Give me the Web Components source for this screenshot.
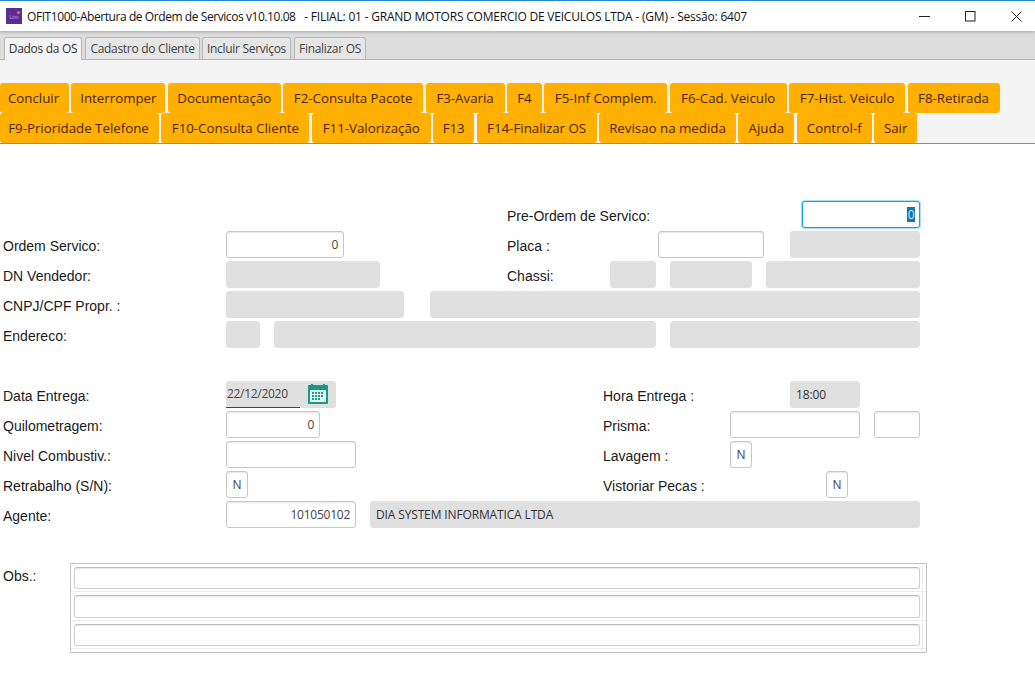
<!DOCTYPE html>
<html lang="pt"><head><meta charset="utf-8"><title>OFIT1000</title>
<style>html,body{margin:0;padding:0;background:#fff;overflow:hidden;height:686px}</style></head>
<body>
<os-app></os-app>
<script>
const UI='"Open Sans","Noto Sans",sans-serif';
function def(name,css,html,init){
  customElements.define(name,class extends HTMLElement{
    constructor(){super();const r=this.attachShadow({mode:'open'});r.innerHTML='<style>'+css+'</style>'+html;}
    connectedCallback(){
      if(this.hasAttribute('w'))this.style.width=this.getAttribute('w')+'px';
      if(this.hasAttribute('ml'))this.style.marginLeft=this.getAttribute('ml')+'px';
      if(init)init.call(this);
    }
  });
}
def('os-titlebar',`:host{display:flex;align-items:center;height:30px;border-top:1px solid #1f86d8;background:#fff;position:relative;z-index:1;box-shadow:0 1px 3px rgba(0,0,0,.25);font:12px/16px ${UI};letter-spacing:-.21px;color:#111;white-space:pre}
.logo{width:16px;height:16px;margin:0 5px 0 6px;background:#5a2d91;display:flex;align-items:center;justify-content:center;position:relative;letter-spacing:0}
.logo span{font:5px/5px "Liberation Sans",sans-serif;color:#b9a3d6;margin-top:2px}
.logo i{position:absolute;right:2px;top:3px;width:3px;height:3px;background:#f0743a;border-radius:50%}
.t{flex:1;padding-top:1px}
.c{display:flex;margin-right:13px;gap:35px;align-items:center}
svg{display:block;width:11px;height:11px;fill:none;stroke:#222;stroke-width:1}`,
`<div class="logo"><span>Linx</span><i></i></div><div class="t"><slot></slot></div>
<div class="c"><svg viewBox="0 0 11 11"><path d="M0 5.5H11"/></svg><svg viewBox="0 0 11 11"><rect x=".5" y=".5" width="9.5" height="9.5"/></svg><svg viewBox="0 0 11 11"><path d="M.5.5L10.5 10.5M10.5.5L.5 10.5"/></svg></div>`);
def('os-tabs',`:host{display:flex;height:28px;padding-left:4px;gap:2px;background:#dcdcdc;border-bottom:1px solid #b4b4b4;align-items:flex-end}`,`<slot></slot>`);
def('os-tab',`:host{display:flex;box-sizing:border-box;height:22px;justify-content:center;align-items:center;background:#e6e6e6;border:1px solid #b8b8b8;border-bottom:0;border-radius:3px 3px 0 0;font:12px/16px ${UI};letter-spacing:-.3px;color:#444;white-space:nowrap}
:host([on]){background:#f4f4f4;height:23px;margin-bottom:-1px;color:#333;position:relative}`,`<slot></slot>`);
def('os-toolbar',`:host{display:block;background:#f4f4f4;padding-top:23px;height:60px;border-bottom:1px solid #8e8e8e}`,`<slot></slot>`);
def('os-btnrow',`:host{display:flex;height:30px;gap:2.4px}`,`<slot></slot>`);
def('os-btn',`:host{display:flex;box-sizing:border-box;justify-content:center;align-items:center;background:#ffb000;border-radius:3px;font:13.3px/16px ${UI};color:#4a2410;white-space:nowrap}
:host([first]){padding-right:2px}`,`<slot></slot>`);
def('os-form',`:host{display:flex;flex-direction:column;gap:3px;padding:57px 0 0 3px}`,`<slot></slot>`);
def('os-row',`:host{display:flex;height:27px;align-items:stretch}:host([sep]){margin-top:30px}`,`<slot></slot>`);
def('os-label',`:host{display:block;flex:none;box-sizing:border-box;padding-top:7px;font:14px/16px "Liberation Sans",sans-serif;color:#1a1a1a;white-space:nowrap}`,`<slot></slot>`);
def('os-field',`:host{display:flex;flex:none;box-sizing:border-box;align-items:center;padding:0 5px;background:#fff;border:1px solid #c6c6c6;border-radius:3px;box-shadow:inset 0 2px 2px -1px rgba(0,0,0,.1);font:12px/16px ${UI};letter-spacing:-.25px;color:#444;white-space:nowrap}
:host([right]){justify-content:flex-end}
:host([center]){justify-content:center;padding:0}
:host([off]){background:#e0e0e0;border-color:#e0e0e0;box-shadow:none;color:#333;letter-spacing:-.14px;padding-top:1px}
:host([focus]){border:1px solid #0aa5e6;box-shadow:0 0 1px 1px rgba(120,205,240,.7);padding-right:4px}`,`<slot></slot>`);
def('os-sel',`:host{display:block;width:8px;height:15px;background:#0a78b4;color:#d8ecf6;font:12px/15px ${UI};text-align:center}`,`<slot></slot>`);
def('os-date',`:host{display:block;flex:none;width:110px;box-sizing:border-box;background:#e0e0e0;border-radius:3px;position:relative;font:12px/26px ${UI};letter-spacing:-.3px;color:#444;padding-left:1px}
.u{position:absolute;left:0;bottom:0;width:74px;height:1px;background:#444}
svg{position:absolute;left:82px;top:3px;width:20px;height:20px}`,
`<slot></slot><div class="u"></div><svg viewBox="0 0 20 20"><rect x="0" y="1" width="20" height="19" rx="1" fill="#159a86"/><rect x="3" y="0" width="2" height="3" fill="#159a86"/><rect x="15" y="0" width="2" height="3" fill="#159a86"/><rect x="2" y="6" width="16" height="12" fill="#e8f6f3"/><g fill="#159a86"><rect x="4" y="8" width="2" height="2"/><rect x="7" y="8" width="2" height="2"/><rect x="10" y="8" width="2" height="2"/><rect x="13" y="8" width="2" height="2"/><rect x="4" y="11" width="2" height="2"/><rect x="7" y="11" width="2" height="2"/><rect x="10" y="11" width="2" height="2"/><rect x="13" y="11" width="2" height="2"/><rect x="4" y="14" width="2" height="2"/><rect x="7" y="14" width="2" height="2"/><rect x="10" y="14" width="2" height="2"/></g></svg>`);
def('os-obs',`:host{display:flex;margin-top:32px;height:90px}`,`<slot></slot>`);
def('os-obsbox',`:host{display:flex;flex-direction:column;box-sizing:border-box;width:857px;height:90px;border:1px solid #c4c4c4;padding:3px 6px 0 3px;position:relative}
:host::after{content:"";position:absolute;top:0;bottom:0;right:3px;width:1px;background:#ececec}`,`<slot></slot>`);
def('os-obsline',`:host{display:block;height:23px;box-sizing:border-box;background:#fff;border:1px solid #cfcfcf;border-top-color:#bdbdbd;border-radius:3px;box-shadow:inset 0 2px 2px -1px rgba(0,0,0,.1);margin-bottom:6px;position:relative}
:host::after{content:"";position:absolute;left:-4px;right:-7px;bottom:-4px;height:1px;background:#ececec}`,``);
def('os-app',`:host{display:block;width:1035px;height:686px;overflow:hidden;background:#fff}`,`
<os-titlebar><span style="letter-spacing:-.43px">OFIT1000-Abertura de Ordem de Servicos v10.10.08</span>   - FILIAL: 01 - GRAND MOTORS COMERCIO DE VEICULOS LTDA - (GM) - Sessão: 6407</os-titlebar>
<os-tabs><os-tab on w="78">Dados da OS</os-tab><os-tab w="115" style="margin-left:1px">Cadastro do Cliente</os-tab><os-tab w="89">Incluir Serviços</os-tab><os-tab w="72" style="margin-left:1px">Finalizar OS</os-tab></os-tabs>
<os-toolbar>
<os-btnrow><os-btn first w="69">Concluir</os-btn><os-btn w="94">Interromper</os-btn><os-btn w="113">Documentação</os-btn><os-btn w="140">F2-Consulta Pacote</os-btn><os-btn w="79">F3-Avaria</os-btn><os-btn w="35">F4</os-btn><os-btn w="123">F5-Inf Complem.</os-btn><os-btn w="117">F6-Cad. Veiculo</os-btn><os-btn w="116">F7-Hist. Veiculo</os-btn><os-btn w="92">F8-Retirada</os-btn></os-btnrow>
<os-btnrow><os-btn first w="159">F9-Prioridade Telefone</os-btn><os-btn w="148">F10-Consulta Cliente</os-btn><os-btn w="119">F11-Valorização</os-btn><os-btn w="41">F13</os-btn><os-btn w="120">F14-Finalizar OS</os-btn><os-btn w="137">Revisao na medida</os-btn><os-btn w="56">Ajuda</os-btn><os-btn w="75">Control-f</os-btn><os-btn w="43">Sair</os-btn></os-btnrow>
</os-toolbar>
<os-form>
<os-row><os-label w="504"></os-label><os-label w="295">Pre-Ordem de Servico:</os-label><os-field w="118" right focus><os-sel>0</os-sel></os-field></os-row>
<os-row><os-label w="223">Ordem Servico:</os-label><os-field w="118" right>0</os-field><os-label ml="163" w="151">Placa :</os-label><os-field w="106"></os-field><os-field off ml="26" w="130"></os-field></os-row>
<os-row><os-label w="223">DN Vendedor:</os-label><os-field off w="154"></os-field><os-label ml="127" w="103">Chassi:</os-label><os-field off w="46"></os-field><os-field off ml="14" w="82"></os-field><os-field off ml="14" w="154"></os-field></os-row>
<os-row><os-label w="223">CNPJ/CPF Propr. :</os-label><os-field off w="178"></os-field><os-field off ml="26" w="490"></os-field></os-row>
<os-row><os-label w="223">Endereco:</os-label><os-field off w="34"></os-field><os-field off ml="14" w="382"></os-field><os-field off ml="14" w="250"></os-field></os-row>
<os-row sep><os-label w="223">Data Entrega:</os-label><os-date>22/12/2020</os-date><os-label ml="267" w="187">Hora Entrega :</os-label><os-field off w="70">18:00</os-field></os-row>
<os-row><os-label w="223">Quilometragem:</os-label><os-field w="94" right>0</os-field><os-label ml="283" w="127">Prisma:</os-label><os-field w="130"></os-field><os-field ml="14" w="46"></os-field></os-row>
<os-row><os-label w="223">Nivel Combustiv.:</os-label><os-field w="130"></os-field><os-label ml="247" w="127">Lavagem :</os-label><os-field w="22" center>N</os-field></os-row>
<os-row><os-label w="223">Retrabalho (S/N):</os-label><os-field w="22" center>N</os-field><os-label ml="355" w="223">Vistoriar Pecas :</os-label><os-field w="22" center>N</os-field></os-row>
<os-row><os-label w="223">Agente:</os-label><os-field w="130" right>101050102</os-field><os-field off ml="14" w="550">DIA SYSTEM INFORMATICA LTDA</os-field></os-row>
<os-obs><os-label w="67" style="padding-top:5px">Obs.:</os-label><os-obsbox><os-obsline></os-obsline><os-obsline></os-obsline><os-obsline></os-obsline></os-obsbox></os-obs>
</os-form>`);
</script>
</body></html>
